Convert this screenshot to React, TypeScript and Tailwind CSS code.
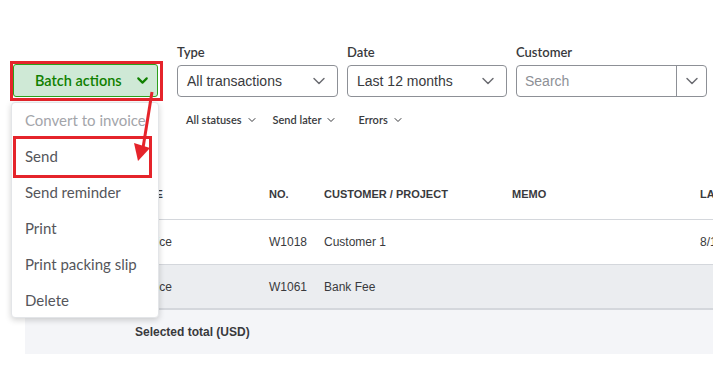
import { ChevronDown } from 'lucide-react';

const menuItems = [
    { label: 'Convert to invoice', disabled: true },
    { label: 'Send', disabled: false },
    { label: 'Send reminder', disabled: false },
    { label: 'Print', disabled: false },
    { label: 'Print packing slip', disabled: false },
    { label: 'Delete', disabled: false },
];

const rows = [
    { type: 'Invoice', no: 'W1018', customer: 'Customer 1', memo: '', last: '8/11/2023', selected: false },
    { type: 'Invoice', no: 'W1061', customer: 'Bank Fee', memo: '', last: '', selected: true },
];

function FilterSelect({ label, value, width }: { label: string; value: string; width: string }) {
    return (
        <div className={`flex flex-col ${width}`}>
            <div className="text-[13px] font-semibold text-[#393a3d] h-[20px] leading-[14px] font-['Lato',sans-serif]">{label}</div>
            <div className="flex items-center justify-between h-[32px] border border-[#8d9096] rounded-[4px] pl-[9px] pr-[8px] text-[14px] text-[#393a3d]">
                <span>{value}</span>
                <ChevronDown className="w-[20px] h-[20px] text-[#6b6c72]" strokeWidth={1.75} />
            </div>
        </div>
    );
}

export default function App() {
    return (
    <div className="relative w-[713px] h-[388px] bg-white overflow-hidden font-['Liberation_Sans',Arial,sans-serif]">

        {/* Filters */}
        <div className="flex pt-[45px] pl-[10px]">
            <div className="mt-[16px] w-[153px] h-[40px] border-[3px] border-[#e5242b] pr-[2px]">
                <button className="flex items-center gap-[12px] w-full h-[33px] pl-[21px] bg-[#cfe9d6] border border-[#2ca01c] rounded-[3px] text-[#108000] text-[14.5px] font-semibold font-['Lato',sans-serif]">
                    Batch actions
                    <ChevronDown className="w-[17px] h-[17px]" strokeWidth={3} />
                </button>
            </div>

            <div className="flex gap-[9px] ml-[14px]">
                <FilterSelect label="Type" value="All transactions" width="w-[161px]" />
                <FilterSelect label="Date" value="Last 12 months" width="w-[160px]" />

                {/* Customer */}
                <div className="flex flex-col w-[191px]">
                    <div className="text-[13px] font-semibold text-[#393a3d] h-[20px] leading-[14px] font-['Lato',sans-serif]">Customer</div>
                    <div className="flex h-[32px] border border-[#8d9096] rounded-[4px] text-[14px]">
                        <div className="flex-1 flex items-center pl-[8px] text-[#8d9096]">Search</div>
                        <div className="w-[30px] border-l border-[#8d9096] flex items-center justify-center">
                            <ChevronDown className="w-[20px] h-[20px] text-[#6b6c72]" strokeWidth={1.75} />
                        </div>
                    </div>
                </div>
            </div>
        </div>

        {/* Sub filters */}
        <div className="flex items-center gap-[15px] ml-[186px] mt-[11px] h-[16px] text-[11px] font-semibold text-[#393a3d] font-['Lato',sans-serif]">
            <span className="flex items-center gap-[4px]">All statuses <ChevronDown className="w-[12px] h-[12px]" /></span>
            <span className="flex items-center gap-[4px]">Send later <ChevronDown className="w-[12px] h-[12px]" /></span>
            <span className="flex items-center gap-[4px] ml-[6px]">Errors <ChevronDown className="w-[12px] h-[12px]" /></span>
        </div>

        {/* Table */}
        <div className="ml-[25px] mt-[42px] w-[720px] text-[12px] text-[#393a3d]">
            <div className="grid grid-cols-[109px_135px_55px_188px_188px_auto] items-center h-[50px] border-b border-[#d4d7dc] font-bold text-[11px] text-[#393a3d] whitespace-nowrap">
                <div></div>
                <div>TYPE</div>
                <div>NO.</div>
                <div>CUSTOMER / PROJECT</div>
                <div>MEMO</div>
                <div>LAST DELIVERED</div>
            </div>
            {rows.map((row, i) => (
            <div key={i} className={`grid grid-cols-[109px_135px_55px_188px_188px_auto] items-center h-[45px] whitespace-nowrap ${row.selected ? 'bg-[#ebedf0] border-b-2' : 'bg-white border-b'} border-[#d4d7dc]`}>
                <div></div>
                <div>{row.type}</div>
                <div>{row.no}</div>
                <div>{row.customer}</div>
                <div>{row.memo}</div>
                <div>{row.last}</div>
            </div>
            ))}
            <div className="flex items-center h-[44px] bg-[#f4f5f8] pl-[110px] font-bold">
                Selected total (USD)
            </div>
        </div>

        {/* Batch actions menu */}
        <div className="absolute left-[11px] top-[102px] w-[148px] h-[216px] bg-white rounded-[4px] border border-[#e3e5e8] shadow-[0_2px_6px_rgba(0,0,0,0.18)] font-['Lato',sans-serif]">
            {menuItems.map((item) => (
            <div key={item.label} className={`flex items-center h-[36px] pl-[13px] pb-[2px] text-[15px] ${item.disabled ? 'text-[#a3a5aa]' : 'text-[#55565b]'}`}>
                {item.label}
            </div>
            ))}
        </div>

        {/* Annotation */}
        <div className="absolute left-[13px] top-[136px] w-[139px] h-[42px] border-[3px] border-[#e5242b]"></div>
        <svg className="absolute left-0 top-0" width="713" height="388" viewBox="0 0 713 388" fill="none">
            <line x1="152" y1="92" x2="143" y2="148" stroke="#e5242b" strokeWidth="3" />
            <polygon points="134,143 150,148 138,161" fill="#e5242b" />
        </svg>
    </div>
    );
}
